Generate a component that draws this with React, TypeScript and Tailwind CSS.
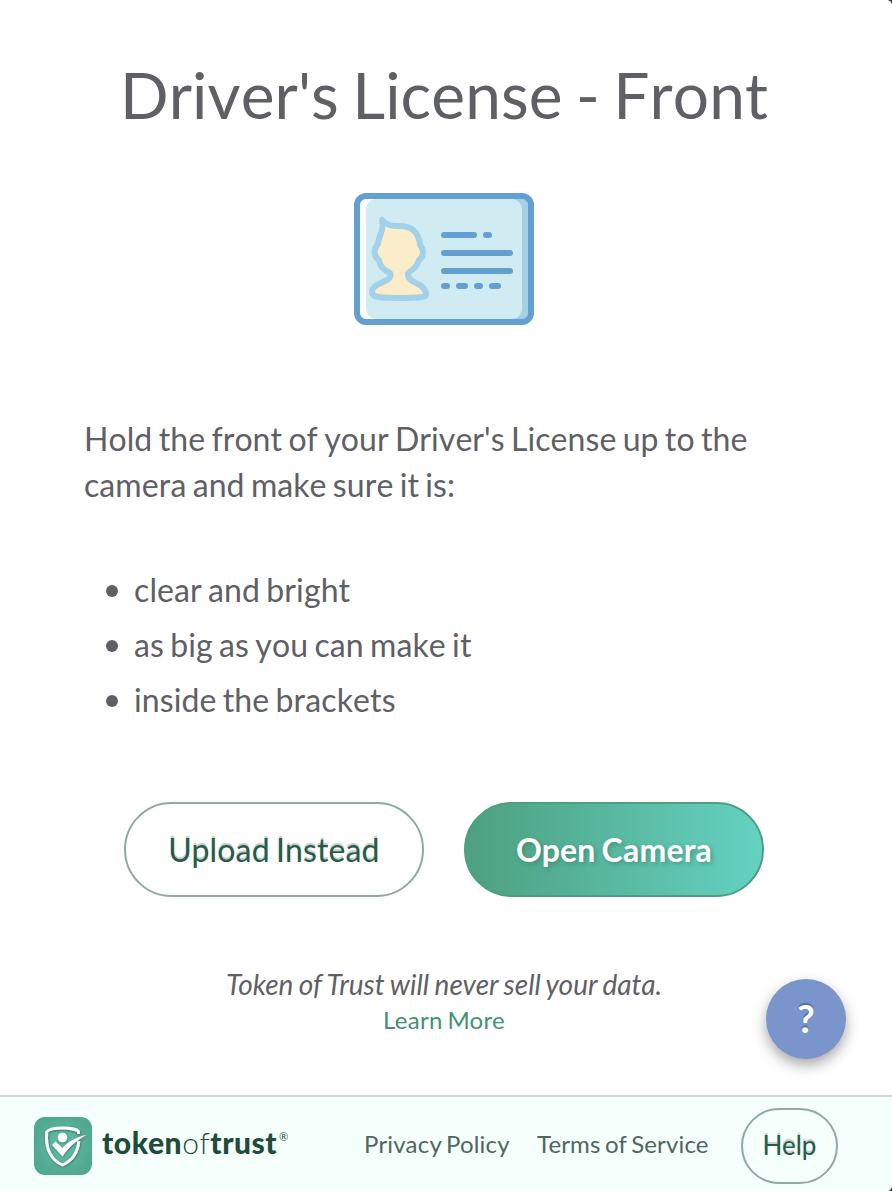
import React from 'react';

function LicenseIcon() {
  return (
    <svg width="180" height="132" viewBox="0 0 180 132" fill="none" aria-hidden="true">
      <rect x="3" y="3" width="174" height="126" rx="9" fill="#fff" />
      <path d="M154 6h14q6 0 6 6v108q0 6-6 6h-14z" fill="#a3d1e8" />
      <rect x="12" y="6" width="156" height="120" rx="10" fill="#d1ebf2" />
      <rect x="3" y="3" width="174" height="126" rx="9" stroke="#64a0cf" strokeWidth="6" />
      <path
        d="M28 27C31 31 36 33 43 33C57 32 65 39 66 52C70 56 70 64 65 67C63 74 59 77 54 80C53 86 58 88 64 91C70 94 72 97 72 102C72 104 66 105 45 105C24 105 18 104 18 99C18 95 22 92 27 90C33 87 38 86 36 80C30 77 26 74 25 67C20 64 19 56 24 51C24 43 31 38 28 27Z"
        fill="#fcedca"
        stroke="#a3d1e8"
        strokeWidth="6"
        strokeLinejoin="round"
      />
      <path
        d="M90 42h30M132 42h3M90 60h66M90 78h66M90 93h3M105 93h6M123 93h3M138 93h6"
        stroke="#64a0cf"
        strokeWidth="6"
        strokeLinecap="round"
      />
    </svg>
  );
}

function ShieldLogo() {
  return (
    <svg width="58" height="58" viewBox="0 0 58 58" fill="none" aria-hidden="true">
      <defs>
        <radialGradient id="tile">
          <stop stopColor="#67c0b0" />
          <stop offset="1" stopColor="#51a98f" />
        </radialGradient>
        <filter id="logoShadow" x="-20%" y="-20%" width="140%" height="140%">
          <feDropShadow dx="0.4" dy="0.8" stdDeviation="0.8" floodColor="#174c3d" floodOpacity="0.65" />
        </filter>
      </defs>
      <rect width="58" height="58" rx="11" fill="url(#tile)" />
      <g filter="url(#logoShadow)">
        <path
          d="M44.5 17V14.5C43.5 13 38 11 28.5 11C19 11 14 13 12.7 15C11.5 29 15 42 28.5 48C39.5 43 44 34 44.8 24"
          stroke="#fff"
          strokeWidth="3"
          strokeLinejoin="round"
        />
        <circle cx="28.5" cy="20.5" r="4.8" fill="#fff" />
        <path d="M18 28L21.5 24.5L28.5 31C35 24 42 20 52.5 18C43 23 35 30 28.5 39.5Z" fill="#fff" />
      </g>
    </svg>
  );
}

export default function App() {
  return (
    <div className="relative flex h-[1191px] w-[892px] flex-col overflow-hidden bg-white font-['Lato',sans-serif] text-[#5f6065]">
      <main className="flex h-[1095px] flex-col">
        <h1 className="mt-[55px] h-20 -translate-x-[2px] text-center text-[64px] leading-20 tracking-[0.1px] whitespace-nowrap [font-kerning:none] [word-spacing:-3.2px]">Driver's License - Front</h1>
        <div className="mt-[58px] flex justify-center pr-1">
          <LicenseIcon />
        </div>
        <p className="mt-[91px] ml-[84px] text-[32px] leading-[46px] tracking-[0.08px] [font-kerning:none] [word-spacing:-2px]">
          Hold the front of your Driver's License up to the<br />camera and make sure it is:
        </p>
        <ul className="mt-[54px] ml-[106px] text-[32px] leading-[55px] tracking-[0.1px] [font-kerning:none] [word-spacing:-2px]">
          {['clear and bright', 'as big as you can make it', 'inside the brackets'].map((item) => (
            <li key={item} className="flex items-center gap-4">
              <span className="mt-0.5 h-3 w-3 rounded-full bg-[#5f6065]" />
              {item}
            </li>
          ))}
        </ul>
        <div className="mt-[75px] flex justify-center gap-10 pr-1">
          <button className="h-[95px] w-[300px] rounded-full border-2 border-[#90aaa1] text-[32px] tracking-[0.15px] text-[#255c4a] [text-shadow:0_-2px_1px_#c8c8c8] [word-spacing:-2px]">
            Upload Instead
          </button>
          <button className="h-[95px] w-[300px] rounded-full border-2 border-[#4da07f] bg-linear-to-r from-[#4da07f] to-[#64d2c2] text-[32px] font-bold tracking-[0.2px] text-white [text-shadow:2px_2px_4px_#34776088] [word-spacing:-2px]">
            Open Camera
          </button>
        </div>
        <div className="mt-[67px] flex flex-col items-center pr-1">
          <p className="text-[28px] leading-10 italic [word-spacing:-1.1px]">Token of Trust will never sell your data.</p>
          <a className="text-2xl leading-[31px] tracking-[0.25px] text-[#439177] [word-spacing:-1.5px]">Learn More</a>
        </div>
      </main>
      <button className="absolute top-[979px] left-[766px] h-20 w-20 rounded-full bg-[#7995cb] pb-0.5 text-[38px] font-bold text-white shadow-[0_6px_14px_rgba(0,0,0,0.35)] [text-shadow:0_-2px_1px_#526c9a]">
        ?
      </button>
      <footer className="flex h-24 items-center border-t-2 border-[#d1d7d5] bg-[#f5fffc] pl-[34px] text-2xl text-[#50665f]">
        <div className="mt-1 flex w-[330px] items-center gap-2.5">
          <ShieldLogo />
          <div className="flex items-center pb-1.5 text-[30px] text-[#1e4c3b]">
            <span className="font-black tracking-[0.6px]">token</span>
            <span className="font-light tracking-[0.7px]">of</span>
            <span className="font-black tracking-[0.5px]">trust</span>
            <span className="mb-3 ml-0.5 text-[11px]">®</span>
          </div>
        </div>
        <a className="w-[173px] tracking-[0.2px] whitespace-nowrap [word-spacing:-1.8px]">Privacy Policy</a>
        <a className="w-[204px] tracking-[0.15px] whitespace-nowrap [word-spacing:-1.8px]">Terms of Service</a>
        <button className="mt-[3px] h-[76px] w-[97px] rounded-[38px] border-2 border-[#90aaa1] text-[26px] text-[#255c4a] [text-shadow:0_-2px_1px_#c8c8c8]">Help</button>
      </footer>
      <svg className="absolute top-0 right-0" width="4" height="4" viewBox="0 0 4 4"><path d="M0 0h4v4Q3 1 0 0" fill="#39393b" /></svg>
      <svg className="absolute right-0 bottom-0" width="4" height="4" viewBox="0 0 4 4"><path d="M4 0v4H0Q3 3 4 0" fill="#39393b" /></svg>
    </div>
  );
}
